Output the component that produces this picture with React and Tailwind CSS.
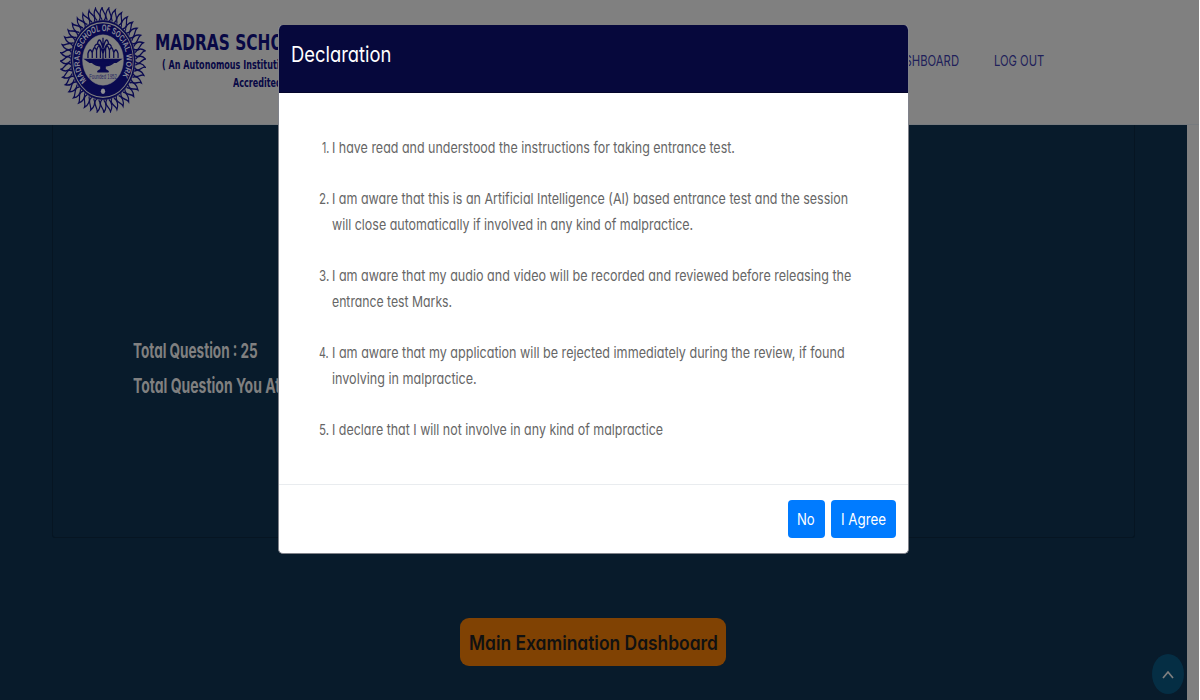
import { useLayoutEffect, useRef } from 'react';

// Sets one line of text to a fixed measure by condensing it horizontally.
function Fit({ w, className = '', children }) {
  const ref = useRef(null);
  useLayoutEffect(() => {
    const el = ref.current;
    el.style.transform = `scaleX(${w / el.offsetWidth})`;
  }, [w]);
  return (
    <span className={`block ${className}`} style={{ width: w }}>
      <span ref={ref} className="inline-block origin-left whitespace-nowrap">
        {children}
      </span>
    </span>
  );
}

const flames = Array.from({ length: 40 }, (_, i) => (i * 360) / 40);

function Seal() {
  return (
    <svg
      viewBox="-100 -100 200 200"
      preserveAspectRatio="none"
      className="h-[106px] w-[86px] shrink-0"
      fill="none"
      stroke="#0a0a50"
    >
      <defs>
        <path id="arc" d="M-37 40 A54.5 54.5 0 1 1 37 40" />
      </defs>
      {flames.map((a) => (
        <path
          key={a}
          transform={`rotate(${a})`}
          strokeWidth="2.8"
          d="M-2 -76 C-9 -82 -8 -92 -2 -99 C-2 -92 6 -88 6 -82 C6 -79 5 -77 3 -75"
        />
      ))}
      <circle r="75" fill="#0a0a50" />
      <circle r="70.5" stroke="#808080" strokeWidth="2" />
      <circle r="47.5" fill="#808080" stroke="#808080" />
      <text fill="#8c8c98" stroke="none" className="font-['Liberation_Sans'] text-[18px] font-bold">
        <textPath href="#arc" textLength="246" lengthAdjust="spacingAndGlyphs" startOffset="2">
          MADRAS SCHOOL OF SOCIAL WORK
        </textPath>
      </text>
      <circle cy="59" r="5" fill="#909096" stroke="none" />
      <g strokeWidth="3">
        <path d="M-35 -4V-12Q-31 -25 -25 -14V-4M-25 -14Q-20 -30 -15 -18V-4M-15 -18Q-9 -34 -6 -20V-4M35 -4V-12Q31 -25 25 -14V-4M25 -14Q20 -30 15 -18V-4M15 -18Q9 -34 6 -20V-4" />
        <path d="M0 -2V-42M0 -22Q-8 -48 -13 -31M0 -22Q8 -48 13 -31M0 -12Q-10 -40 -20 -25M0 -12Q10 -40 20 -25" />
        <path d="M-40 -1H40L31 4H-31Z" fill="#0a0a50" />
        <path d="M-26 4H26Q16 11 5 11L5 18L13 22H-13L-5 18L-5 11Q-16 11 -26 4Z" fill="#0a0a50" />
      </g>
      <text
        x="-32"
        y="36"
        textLength="64"
        lengthAdjust="spacingAndGlyphs"
        fill="#252560"
        stroke="none"
        className="font-['Liberation_Sans'] text-[12px]"
      >
        Founded 1952
      </text>
    </svg>
  );
}

function Header() {
  return (
    <header className="flex h-[125px] w-[1199px] border-b border-[#777b7f] bg-[#808080] pt-[7px] pl-[60px]">
      <Seal />
      <div className="w-[743px] pt-[22px] pl-[9px] font-['DejaVu_Sans'] font-bold text-[#080845]">
        <Fit w={151} className="text-[22px] leading-[28px]">MADRAS SCHOOL</Fit>
        <div className="pl-[7px]">
          <Fit w={129} className="text-[11.5px] leading-[16px]">( An Autonomous Institution</Fit>
        </div>
        <div className="pt-[2px] pl-[78px]">
          <Fit w={49} className="text-[11.5px] leading-[16px]">Accredited</Fit>
        </div>
      </div>
      <nav className="flex gap-[35px] pt-[44px] text-[15px] leading-[20px] text-[#20205a]">
        <Fit w={70}>DASHBOARD</Fit>
        <Fit w={50}>LOG OUT</Fit>
      </nav>
    </header>
  );
}

const items = [
  [['I have read and understood the instructions for taking entrance test.', 403]],
  [
    ['I am aware that this is an Artificial Intelligence (AI) based entrance test and the session', 516],
    ['will close automatically if involved in any kind of malpractice.', 361],
  ],
  [
    ['I am aware that my audio and video will be recorded and reviewed before releasing the', 519],
    ['entrance test Marks.', 120],
  ],
  [
    ['I am aware that my application will be rejected immediately during the review, if found', 513],
    ['involving in malpractice.', 145],
  ],
  [['I declare that I will not involve in any kind of malpractice', 331]],
];

function Modal() {
  return (
    <div className="absolute top-[25px] left-[278px] flex h-[529px] w-[631px] flex-col overflow-hidden rounded-[5px] border border-t-0 border-[#80828a] bg-white">
      <div className="h-[68px] shrink-0 border-b border-[#03042a] bg-[#06083c] pt-[14px] pl-[12px] text-[21.5px] leading-[30px] text-white">
        <Fit w={100}>Declaration</Fit>
      </div>
      <ol className="flex h-[391px] shrink-0 flex-col gap-[25.7px] pt-[41.8px] pl-[40px] text-[15px] leading-[25.7px] text-[#666]">
        {items.map((lines, i) => (
          <li key={i} className="flex gap-[3px]">
            <span className="flex w-[10px] justify-end">
              <Fit w={i ? 10 : 7}>{i + 1}.</Fit>
            </span>
            <div>
              {lines.map(([text, w]) => (
                <Fit key={text} w={w}>{text}</Fit>
              ))}
            </div>
          </li>
        ))}
      </ol>
      <div className="flex grow justify-end gap-[6px] border-t border-[#e9ecef] pt-[15px] pr-[12.5px] text-[16px] text-white">
        <button className="flex h-[38px] w-[37.5px] items-center justify-center rounded-[4px] bg-[#007bff]">
          <Fit w={18}>No</Fit>
        </button>
        <button className="flex h-[38px] w-[64.5px] items-center justify-center rounded-[4px] bg-[#007bff]">
          <Fit w={45}>I Agree</Fit>
        </button>
      </div>
    </div>
  );
}

export default function App() {
  return (
    <div className="relative h-[700px] w-[1200px] overflow-hidden bg-white font-['Inter',sans-serif] [font-feature-settings:'cv11']">
      <Header />
      <div className="flex h-[575px] w-[1199px] bg-[#808080]">
        <main className="flex w-[1187px] flex-col items-start bg-[#081b2b]">
          <section className="ml-[52px] h-[413px] w-[1083px] rounded-b-[3px] border border-t-0 border-[#061522] pt-[211px] pl-[80px] text-[20.5px] leading-[30px] font-bold text-[#808080]">
            <Fit w={125}>Total Question : 25</Fit>
            <div className="h-[5px]" />
            <Fit w={178}>Total Question You Attend</Fit>
          </section>
          <button className="mt-[80px] ml-[460px] flex h-[48px] w-[266px] items-center justify-center rounded-[9px] bg-[#804203] pt-[1px] text-[20px] font-semibold text-[#111]">
            <Fit w={249}>Main Examination Dashboard</Fit>
          </button>
        </main>
      </div>
      <Modal />
      <button className="absolute top-[654px] left-[1152px] flex h-[40px] w-[32px] items-center justify-center rounded-[50%] bg-[#052e44]">
        <svg viewBox="0 0 12 9" className="mt-[1px] h-[9px] w-[12px]" fill="none" stroke="#808080" strokeWidth="1.7">
          <path d="M1 8 6 2l5 6" />
        </svg>
      </button>
    </div>
  );
}
